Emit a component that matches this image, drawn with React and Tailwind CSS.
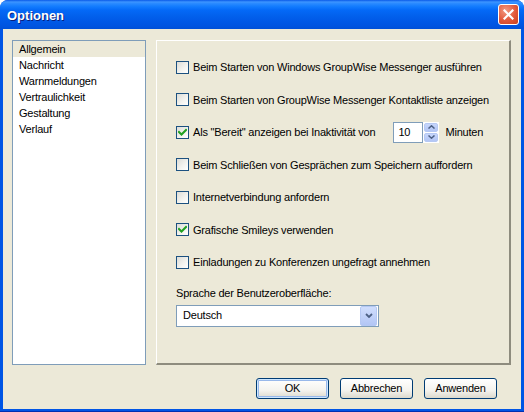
const font = { fontFamily: '"Liberation Sans", Arial, sans-serif' };

function Check({ checked }) {
  return (
    <span className="relative w-[13px] h-[13px] shrink-0 border border-[#1C5180] bg-[linear-gradient(135deg,#DCDCD7_0%,#F4F4F0_60%,#FFFFFF_100%)]">
      {checked && (
        <svg className="absolute left-[1px] top-[1px]" width="9" height="9" viewBox="0 0 9 9">
          <path d="M1 4 L3.5 6.5 L8 2" stroke="#21A121" strokeWidth="2" fill="none" strokeLinecap="square" />
        </svg>
      )}
    </span>
  );
}

function Row({ checked, label, children }) {
  return (
    <div className="h-[32.5px] flex items-center">
      <Check checked={checked} />
      <span className="ml-[4px] whitespace-nowrap">{label}</span>
      {children}
    </div>
  );
}

function XpButton({ children, def }) {
  return (
    <button
      className={
        "w-[73px] h-[21px] rounded-[3px] border border-[#003C74] text-[11px] text-black bg-[linear-gradient(to_bottom,#FFFFFF_0%,#F4F3EE_60%,#DCD9CD_100%)] " +
        (def ? "shadow-[inset_0_0_0_1px_#CEE7FF,inset_0_0_0_2px_#98B8EA]" : "")
      }
    >
      {children}
    </button>
  );
}

const items = ["Allgemein", "Nachricht", "Warnmeldungen", "Vertraulichkeit", "Gestaltung", "Verlauf"];

export default function App() {
  return (
    <div
      style={font}
      className="w-[524px] h-[412px] flex flex-col rounded-t-[8px] overflow-hidden bg-[#0055E5] border-b-[1px] border-[#0030B0] text-[11px] tracking-[-0.2px] text-black"
    >
      <div className="h-[29px] shrink-0 flex items-center justify-between pl-[7px] pr-[5px] bg-[linear-gradient(to_bottom,#0A5AE8_0%,#3D95FF_7%,#2A8AFF_12%,#137CFE_22%,#0469F7_35%,#0260EC_55%,#0058E6_75%,#0054E0_90%,#0050D8_100%)]">
        <span className="text-white font-bold text-[13px] tracking-normal pt-[2px] [text-shadow:1px_1px_0_#0A1E7A]">Optionen</span>
        <div className="w-[21px] h-[21px] rounded-[3px] border border-white bg-[radial-gradient(circle_at_35%_30%,#F19A82_0%,#E2583A_55%,#C7401F_100%)] flex items-center justify-center">
          <svg width="11" height="11" viewBox="0 0 11 11">
            <path d="M1.5 1.5 L9.5 9.5 M9.5 1.5 L1.5 9.5" stroke="#FFFFFF" strokeWidth="2.2" strokeLinecap="square" />
          </svg>
        </div>
      </div>

      <div className="flex-1 mx-[3px] mb-[2px] bg-[#ECE9D8] flex flex-col pt-[11px] pl-[9px] pr-[10px]">
        <div className="flex h-[325px]">
          <div className="w-[134px] border border-[#7F9DB9] bg-white">
            {items.map((it, i) => (
              <div
                key={it}
                className={"h-[16px] leading-[16px] pl-[6px] " + (i === 0 ? "bg-[#ECE9D8]" : "")}
              >
                {it}
              </div>
            ))}
          </div>

          <div className="ml-[10px] flex-1 border-t border-l border-white border-r-2 border-b-2 border-r-[#8E8C7E] border-b-[#8E8C7E] pl-[19px] pt-[10px]">
            <Row label="Beim Starten von Windows GroupWise Messenger ausführen" />
            <Row label="Beim Starten von GroupWise Messenger Kontaktliste anzeigen" />
            <Row checked label='Als "Bereit" anzeigen bei Inaktivität von'>
              <div className="ml-[18px] flex h-[21px]">
                <div className="w-[30px] border border-[#7F9DB9] bg-white pl-[4px] leading-[19px]">10</div>
                <div className="w-[16px] flex flex-col bg-white p-[1px] gap-[1px]">
                  <div className="flex-1 rounded-[2px] bg-[linear-gradient(to_bottom,#C6D6FC,#B3C6F5)] border border-[#B5C8F3] flex items-center justify-center">
                    <svg width="7" height="4" viewBox="0 0 7 4"><path d="M0.5 3.5 L3.5 0.8 L6.5 3.5" stroke="#4D6185" strokeWidth="1.5" fill="none" /></svg>
                  </div>
                  <div className="flex-1 rounded-[2px] bg-[linear-gradient(to_bottom,#C6D6FC,#B3C6F5)] border border-[#B5C8F3] flex items-center justify-center">
                    <svg width="7" height="4" viewBox="0 0 7 4"><path d="M0.5 0.5 L3.5 3.2 L6.5 0.5" stroke="#4D6185" strokeWidth="1.5" fill="none" /></svg>
                  </div>
                </div>
              </div>
              <span className="ml-[6px]">Minuten</span>
            </Row>
            <Row label="Beim Schließen von Gesprächen zum Speichern auffordern" />
            <Row label="Internetverbindung anfordern" />
            <Row checked label="Grafische Smileys verwenden" />
            <Row label="Einladungen zu Konferenzen ungefragt annehmen" />

            <div className="mt-[8px] h-[13px] leading-[13px]">Sprache der Benutzeroberfläche:</div>
            <div className="mt-[5px] w-[203px] h-[22px] border border-[#7F9DB9] bg-white flex items-center">
              <span className="flex-1 pl-[6px]">Deutsch</span>
              <div className="w-[17px] h-[20px] m-[1px] rounded-[2px] border border-[#B5C8F3] bg-[linear-gradient(to_bottom,#D0DEFD,#B3C6F5)] flex items-center justify-center">
                <svg width="8" height="5" viewBox="0 0 8 5"><path d="M1 1 L4 4 L7 1" stroke="#4D6185" strokeWidth="1.8" fill="none" /></svg>
              </div>
            </div>
          </div>
        </div>

        <div className="mt-[13px] flex justify-end gap-[11px] pr-[14px]">
          <XpButton def>OK</XpButton>
          <XpButton>Abbrechen</XpButton>
          <XpButton>Anwenden</XpButton>
        </div>
      </div>
    </div>
  );
}
